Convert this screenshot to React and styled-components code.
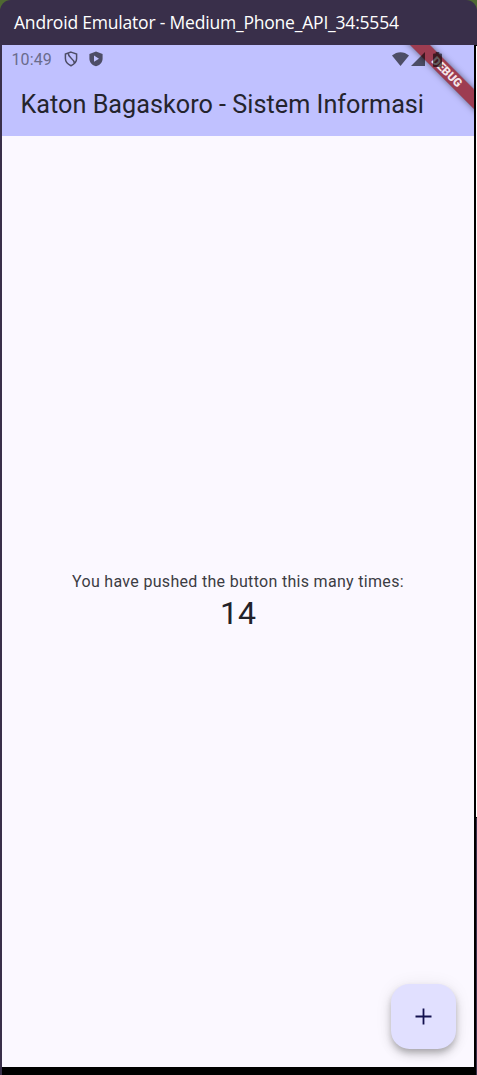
import React, { useState } from 'react';
import styled, { createGlobalStyle } from 'styled-components';

const Global = createGlobalStyle`
  * { box-sizing: border-box; }
  html, body { margin: 0; padding: 0; }
  body { background: #4f6932; overflow: hidden; }
`;

const Window = styled.div`
  width: 477px;
  height: 1075px;
  display: flex;
  flex-direction: column;
  background: #392f4a;
  border-radius: 11px 11px 0 0;
  overflow: hidden;
`;

const TitleBar = styled.header`
  height: 45px;
  flex: none;
  padding-left: 14px;
  line-height: 45px;
  font-family: "Open Sans", "Noto Sans", sans-serif;
  font-size: 17.5px;
  letter-spacing: -0.2px;
  color: #fff;
  white-space: nowrap;
`;

const Body = styled.div`
  flex: 1;
  display: flex;
  padding-left: 2px;
`;

const Device = styled.main`
  width: 472px;
  display: flex;
  flex-direction: column;
  position: relative;
  overflow: hidden;
  background: #fbf8ff;
  border-bottom: 8px solid #000;
  font-family: Roboto, sans-serif;
`;

const Edge = styled.div`
  width: 3px;
  display: flex;
`;

const EdgeLine = styled.div`
  width: 2px;
  background: #000;
`;

const EdgeTrack = styled.div`
  width: 1px;
  height: 773px;
  background: #fff;
  border-top: 1px solid #000;
  border-bottom: 1px solid #000;
`;

const Header = styled.div`
  height: 91px;
  flex: none;
  background: #c0c1ff;
`;

const StatusBar = styled.div`
  position: relative;
  z-index: 2;
  height: 28px;
  display: flex;
  align-items: center;
  padding: 0 32.2px 0 9.5px;
  color: rgba(0, 0, 0, 0.6);
`;

const Clock = styled.span`
  width: 52px;
  font-size: 16px;
  letter-spacing: 0.1px;
  color: #6a6b8c;
`;

const StatusIcons = styled.div`
  display: flex;
  align-items: center;
  gap: ${(p) => p.$gap}px;
  margin-left: ${(p) => (p.$end ? 'auto' : '0')};
  svg { display: block; }
  svg:last-child { margin-left: ${(p) => (p.$end ? '5px' : '0')}; }
`;

const AppTitle = styled.h1`
  margin: 0;
  padding-left: 18.5px;
  font-size: 25.2px;
  font-weight: 400;
  line-height: 63px;
  letter-spacing: 0.02px;
  color: #24242d;
  white-space: nowrap;
`;

const Content = styled.section`
  flex: 1;
  display: flex;
  flex-direction: column;
  align-items: center;
  justify-content: center;
`;

const Caption = styled.p`
  margin: 0;
  font-size: 16px;
  line-height: 23px;
  letter-spacing: 0.31px;
  color: #3c3c43;
  white-space: nowrap;
`;

const Count = styled.p`
  margin: 0;
  font-size: 32px;
  line-height: 41px;
  color: #222229;
`;

const Banner = styled.div`
  position: absolute;
  left: 384.9px;
  top: 20.2px;
  width: 120px;
  height: 13.8px;
  transform: rotate(45deg);
  background: rgba(146, 18, 26, 0.76);
  box-shadow: 0 0 6px rgba(0, 0, 0, 0.5);
  color: #f4e6ea;
  font-size: 11.7px;
  font-weight: 900;
  line-height: 14px;
  text-align: center;
`;

const AddButton = styled.button`
  position: absolute;
  right: 18px;
  bottom: 18px;
  width: 65px;
  height: 65px;
  padding: 0;
  border: 0;
  border-radius: 18.4px;
  display: flex;
  align-items: center;
  justify-content: center;
  background: #e1e0ff;
  box-shadow: 0 4px 6px -1px rgba(0, 0, 0, 0.22), 0 6px 11px rgba(0, 0, 0, 0.13), 0 1px 18px rgba(0, 0, 0, 0.07);
`;

const ShieldOff = () => (
  <svg width="14" height="16" viewBox="0 0 14 16" fill="none" stroke="currentColor" strokeWidth="1.5">
    <path d="M7 1.1 12.600 3v4.500c0 3.300-2.300 5.700-5.600 7.200-3.300-1.500-5.600-3.900-5.600-7.200V3ZM4.300 2.200C3.900 7 10.300 7.300 10.400 12.300" />
  </svg>
);

const ShieldPlay = () => (
  <svg width="14" height="16" viewBox="0 0 14 16">
    <path fill="currentColor" fillRule="evenodd" d="M7 .4 13.600 3v4.700c0 3.500-2.800 6.500-6.600 7.600C3.200 14.200.4 11.200.4 7.700V3ZM5 4.600v6.200L10 7.700Z" />
  </svg>
);

const Wifi = () => (
  <svg width="17" height="14" viewBox="0 0 17 14">
    <path fill="currentColor" d="M0 3.600C5-.9 12-.9 17 3.600L8.500 14Z" />
  </svg>
);

const Signal = () => (
  <svg width="14" height="14" viewBox="0 0 14 14">
    <path fill="currentColor" d="M14 0v14H0Z" />
  </svg>
);

const Battery = () => (
  <svg width="9" height="15" viewBox="0 0 9 15">
    <path fill="currentColor" d="M2.700 0h3.600v1.500H8q1 0 1 1V14q0 1-1 1H1q-1 0-1-1V2.500q0-1 1-1h1.700Z" />
  </svg>
);

const Plus = () => (
  <svg width="17" height="17" viewBox="0 0 17 17" fill="none" stroke="#12104f" strokeWidth="1.800">
    <path d="M8.500 .5v16M.5 8.500h16" />
  </svg>
);

export default function App() {
  const [count, setCount] = useState(14);
  return (
    <>
      <Global />
      <Window>
        <TitleBar>Android Emulator - Medium_Phone_API_34:5554</TitleBar>
        <Body>
          <Device>
            <Header>
              <StatusBar>
                <Clock>10:49</Clock>
                <StatusIcons $gap={11}>
                  <ShieldOff />
                  <ShieldPlay />
                </StatusIcons>
                <StatusIcons $gap={2.500} $end>
                  <Wifi />
                  <Signal />
                  <Battery />
                </StatusIcons>
              </StatusBar>
              <AppTitle>Katon Bagaskoro - Sistem Informasi</AppTitle>
            </Header>
            <Content>
              <Caption>You have pushed the button this many times:</Caption>
              <Count>{count}</Count>
            </Content>
            <Banner>DEBUG</Banner>
            <AddButton aria-label="Increment" onClick={() => setCount(count + 1)}>
              <Plus />
            </AddButton>
          </Device>
          <Edge>
            <EdgeLine />
            <EdgeTrack />
          </Edge>
        </Body>
      </Window>
    </>
  );
}
